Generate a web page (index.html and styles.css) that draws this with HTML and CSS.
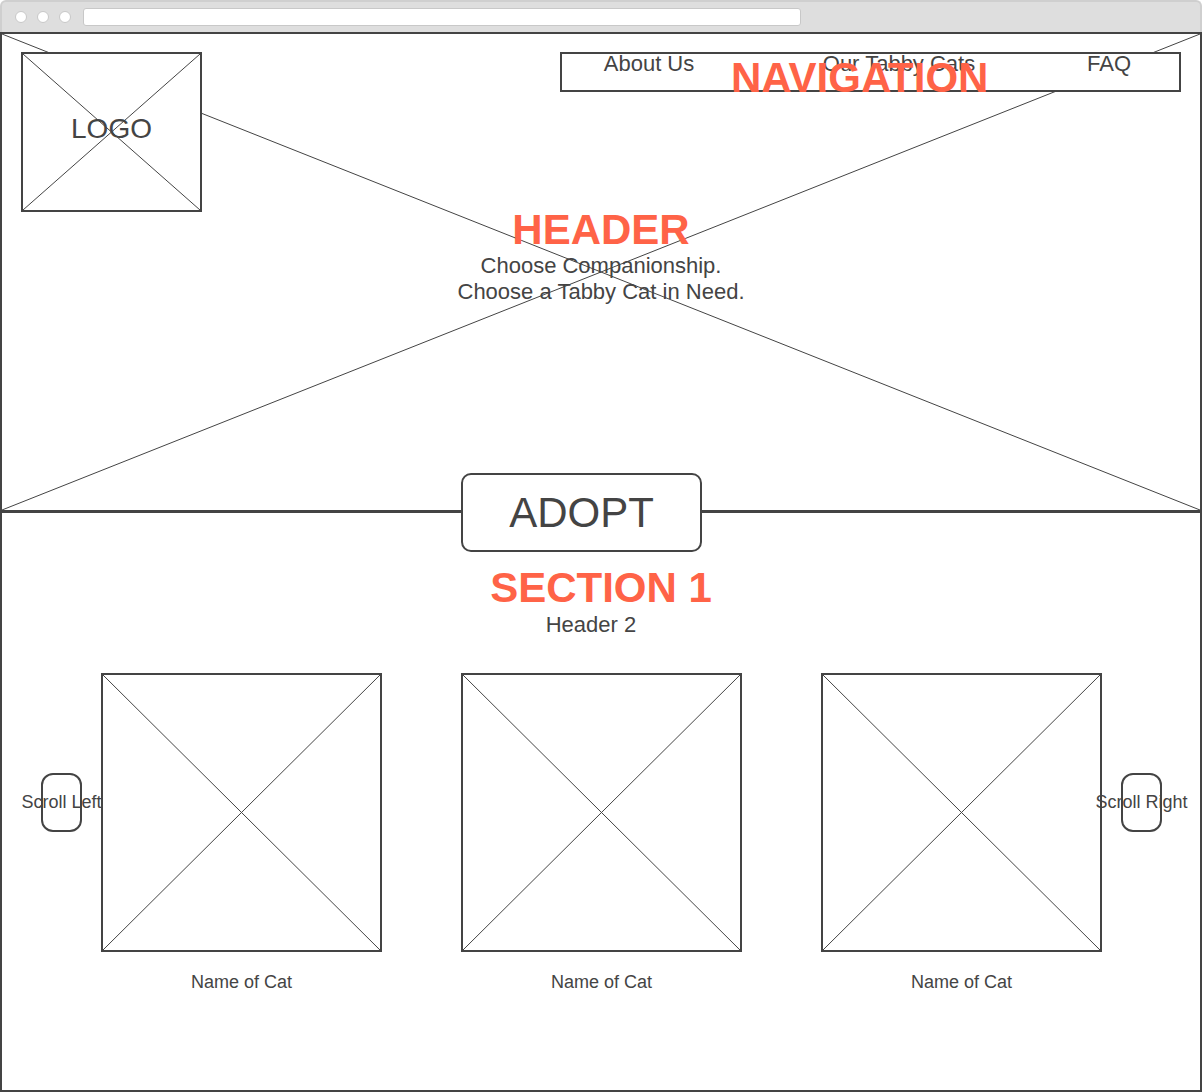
FILE: index.html
```html
<!DOCTYPE html>
<html>

	<head>
		<meta charset="utf-8" />
		<title>Tabby Cats wireframe</title>
		<link rel="stylesheet" href="styles.css">
	</head>

	<body>
		<div class="chrome">
			<span class="dot"></span>
			<span class="dot"></span>
			<span class="dot"></span>
			<div class="url"></div>
		</div>
		<div class="window">
			<div class="hero">
				<svg class="hero-x" viewBox="0 0 100 100" preserveAspectRatio="none">
					<line x1="0" y1="0" x2="100" y2="100" vector-effect="non-scaling-stroke" />
					<line x1="100" y1="0" x2="0" y2="100" vector-effect="non-scaling-stroke" />
				</svg>
				<div class="top">
					<div class="logo">
						<svg class="cross" viewBox="0 0 100 100" preserveAspectRatio="none">
							<line x1="0" y1="0" x2="100" y2="100" vector-effect="non-scaling-stroke" />
							<line x1="100" y1="0" x2="0" y2="100" vector-effect="non-scaling-stroke" />
						</svg>
						<span>LOGO</span>
					</div>
					<div class="nav">
						<a class="nav-a">About Us</a>
						<a class="nav-b">Our Tabby Cats</a>
						<a class="nav-c">FAQ</a>
						<div class="nav-label">NAVIGATION</div>
					</div>
				</div>
				<h1 class="red-title">HEADER</h1>
				<p class="tagline">Choose Companionship.<br>Choose a Tabby Cat in Need.</p>
				<div class="adopt">ADOPT</div>
			</div>
			<div class="section">
				<h2 class="red-title">SECTION 1</h2>
				<p class="sub">Header 2</p>
				<div class="cats">
					<div class="scroll">Scroll Left</div>
					<div class="cat">
						<div class="photo">
							<svg class="cross" viewBox="0 0 100 100" preserveAspectRatio="none">
								<line x1="0" y1="0" x2="100" y2="100" vector-effect="non-scaling-stroke" />
								<line x1="100" y1="0" x2="0" y2="100" vector-effect="non-scaling-stroke" />
							</svg>
						</div>
						<p class="name">Name of Cat</p>
					</div>
					<div class="cat">
						<div class="photo">
							<svg class="cross" viewBox="0 0 100 100" preserveAspectRatio="none">
								<line x1="0" y1="0" x2="100" y2="100" vector-effect="non-scaling-stroke" />
								<line x1="100" y1="0" x2="0" y2="100" vector-effect="non-scaling-stroke" />
							</svg>
						</div>
						<p class="name">Name of Cat</p>
					</div>
					<div class="cat">
						<div class="photo">
							<svg class="cross" viewBox="0 0 100 100" preserveAspectRatio="none">
								<line x1="0" y1="0" x2="100" y2="100" vector-effect="non-scaling-stroke" />
								<line x1="100" y1="0" x2="0" y2="100" vector-effect="non-scaling-stroke" />
							</svg>
						</div>
						<p class="name">Name of Cat</p>
					</div>
					<div class="scroll">Scroll Right</div>
				</div>
			</div>
		</div>
	</body>

</html>
```

FILE: styles.css
```css
* {
	padding: 0px;
	margin: 0px;
	box-sizing: border-box;
}

body {
	font-family: "Liberation Sans", Arial, sans-serif;
	color: #444;
	background: #fff;
}

/* browser bar */
.chrome {
	height: 32px;
	background: #dedede;
	border: 2px solid #cfcfcf;
	border-bottom: none;
	border-radius: 6px 6px 0 0;
	display: flex;
	align-items: center;
	padding-left: 13px;
	gap: 10px;
}

.dot {
	width: 12px;
	height: 12px;
	border-radius: 50%;
	background: #fff;
	border: 1px solid #c8c8c8;
}

.url {
	width: 718px;
	height: 18px;
	margin-left: 2px;
	background: #fff;
	border: 1px solid #c8c8c8;
	border-radius: 3px;
}

.window {
	height: 1060px;
	border: 2px solid #444;
}

svg line {
	stroke: #444;
	stroke-width: 1;
}

.cross,
.hero-x {
	position: absolute;
	top: 0;
	left: 0;
	width: 100%;
	height: 100%;
}

/* header */
.hero {
	position: relative;
	isolation: isolate;
	height: 479px;
	border-bottom: 3px solid #444;
	text-align: center;
}

.hero-x {
	z-index: -1;
}

.top {
	display: flex;
	justify-content: space-between;
	align-items: flex-start;
	padding: 18px 19px 0 19px;
}

.logo {
	position: relative;
	width: 181px;
	height: 160px;
	border: 2px solid #444;
	background: #fff;
	display: flex;
	align-items: center;
	justify-content: center;
	padding-bottom: 6px;
	font-size: 28px;
}

.logo span {
	position: relative;
}

.nav {
	position: relative;
	width: 621px;
	height: 40px;
	border: 2px solid #444;
	background: #fff;
	display: flex;
	align-items: flex-start;
	font-size: 22px;
	line-height: 24px;
}

.nav a {
	margin-top: -2px;
	text-align: center;
	white-space: nowrap;
}

.nav-a {
	width: 174px;
}

.nav-b {
	width: 326px;
}

.nav-c {
	width: 94px;
}

.nav-label {
	position: absolute;
	top: 3px;
	left: 169px;
	font-size: 42px;
	line-height: 42px;
	font-weight: bold;
	color: #ff6347;
	white-space: nowrap;
}

.red-title {
	font-size: 42px;
	line-height: 36px;
	font-weight: bold;
	color: #ff6347;
}

.tagline {
	margin-top: 5px;
	font-size: 22px;
	line-height: 26px;
}

.adopt {
	position: absolute;
	top: 439px;
	left: 459px;
	width: 241px;
	height: 79px;
	border: 2px solid #444;
	border-radius: 10px;
	background: #fff;
	display: flex;
	align-items: center;
	justify-content: center;
	font-size: 42px;
}

/* section 1 */
.section {
	padding-top: 57px;
	text-align: center;
}

.sub {
	margin-top: 6px;
	margin-left: -20px;
	font-size: 22px;
	line-height: 26px;
}

.cats {
	display: flex;
	align-items: flex-start;
	padding: 0 39px;
	margin-top: 35px;
}

.scroll {
	width: 41px;
	height: 59px;
	margin-top: 100px;
	border: 2px solid #444;
	border-radius: 12px;
	display: flex;
	align-items: center;
	justify-content: center;
	white-space: nowrap;
	font-size: 18px;
}

.cat {
	width: 281px;
	margin-left: 19px;
}

.cat + .cat {
	margin-left: 79px;
}

.cat + .scroll {
	margin-left: 19px;
}

.photo {
	position: relative;
	width: 281px;
	height: 279px;
	border: 2px solid #444;
}

.name {
	margin-top: 20px;
	font-size: 18px;
	line-height: 20px;
}
```
